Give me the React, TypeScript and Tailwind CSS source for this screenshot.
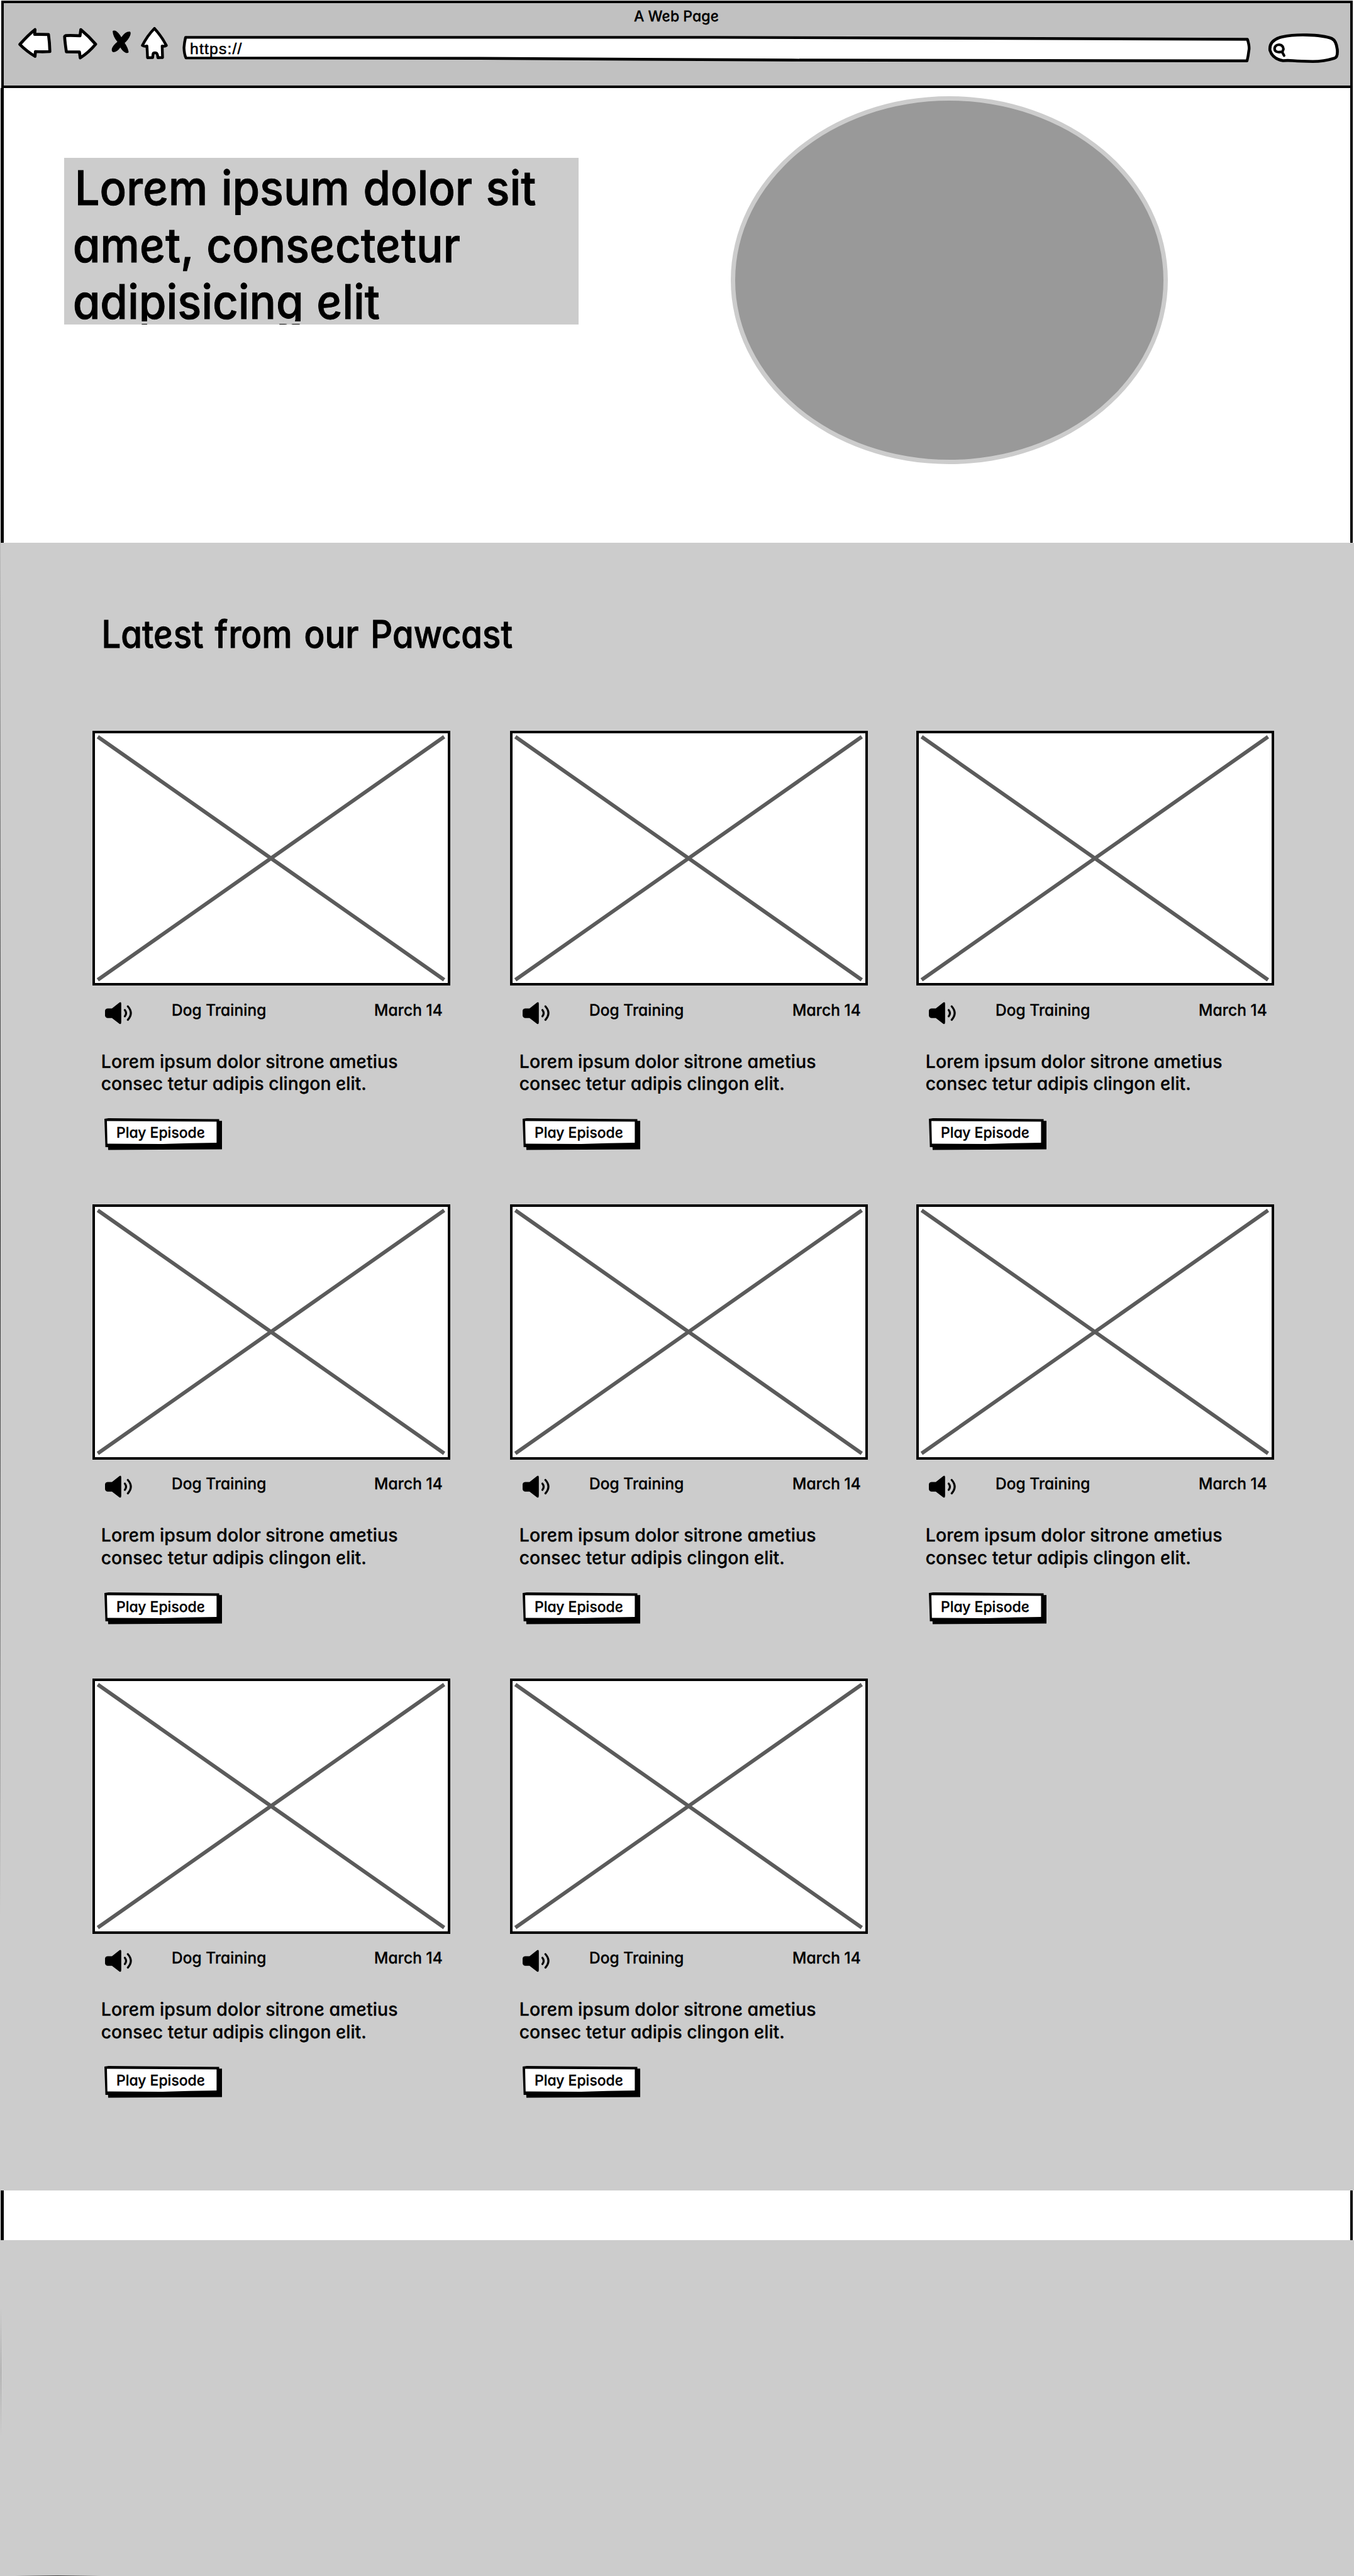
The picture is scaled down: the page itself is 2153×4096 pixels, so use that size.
import type { ReactNode } from "react";

const outline = {
  fill: "#fff",
  stroke: "#000",
  strokeWidth: 15,
  strokeLinejoin: "round" as const,
  strokeLinecap: "round" as const,
};

/* Upright single-storey lettering: the italic cut, sheared back to vertical. */
function Ink({ className, children }: { className: string; children: ReactNode }) {
  return (
    <span className={`inline-block whitespace-nowrap italic skew-x-[9.4deg] ${className}`}>{children}</span>
  );
}

function BackIcon() {
  return (
    <svg viewBox="90 138 175 165" className="h-[51.9px] w-[55.1px] shrink-0">
      <path
        {...outline}
        d="M101 226 Q142 179 178 151 Q177 165 176 175 Q210 174 246 176 Q252 218 253 262 Q215 264 180 262 L178 286 Q137 262 101 226Z"
      />
    </svg>
  );
}

function ForwardIcon() {
  return (
    <svg viewBox="310 138 185 165" className="ml-[14.2px] h-[51.9px] w-[58.2px] shrink-0">
      <path
        {...outline}
        d="M331 181 Q366 180 403 182 L407 151 Q449 186 482 225 Q446 268 404 294 L400 264 L334 263 Q327 218 325 186 Q326 182 331 181Z"
      />
    </svg>
  );
}

function StopIcon() {
  return (
    <svg viewBox="555 138 110 165" className="ml-[18.9px] h-[51.9px] w-[34.6px] shrink-0">
      <path d="M568 159 Q573 153 584 157 Q601 168 612 190 Q632 159 655 161 Q662 164 657 180 Q648 202 629 218 Q646 243 649 264 Q648 271 636 269 Q618 261 607 241 Q591 264 571 265 Q562 263 564 248 Q570 230 592 213 Q570 188 568 159Z" />
    </svg>
  );
}

function HomeIcon() {
  return (
    <svg viewBox="705 138 150 165" className="ml-[12.6px] h-[51.9px] w-[47.2px] shrink-0">
      <path
        {...outline}
        strokeWidth={14}
        d="M780 145 Q818 187 840 231 Q830 237 819 234 Q820 264 821 292 L797 293 Q796 270 788 269 Q775 267 773 274 L771 292 L745 293 Q744 262 742 234 Q730 238 719 231 Q743 183 780 145Z"
      />
    </svg>
  );
}

function AddressBar() {
  return (
    <div className="relative ml-[18.9px] h-[59.8px] w-[1701.4px] shrink-0 pt-[19.5px] pl-[14.2px]">
      <svg viewBox="915 138 5405 190" className="absolute inset-0 h-full w-full">
        <path
          {...outline}
          strokeWidth={14}
          d="M937 190 L3600 190 Q5000 192 6302 200 Q6314 238 6309 258 Q6306 285 6300 309 Q5000 308 4000 305 Q3000 297 2400 296 L939 294 Q930 275 929 242 Q931 215 937 190Z"
        />
      </svg>
      <span className="relative block font-['Liberation_Sans',sans-serif] text-[24.6px] leading-[30px] tracking-[1.2px] [-webkit-text-stroke:0.6px_black]">
        https://
      </span>
    </div>
  );
}

function SearchBox() {
  return (
    <svg viewBox="1060 138 370 190" className="ml-[25.2px] h-[59.8px] w-[116.5px] shrink-0">
      <path
        {...outline}
        d="M1140 308 Q1088 300 1074 256 Q1068 205 1134 188 Q1190 176 1260 178 Q1345 180 1386 196 Q1409 207 1414 252 Q1417 290 1400 295 Q1345 312 1290 312 Q1230 311 1190 308 Q1160 306 1140 308Z"
      />
      <path
        fill="none"
        stroke="#000"
        strokeWidth="13"
        strokeLinecap="round"
        d="M1135 263 Q1098 270 1097 247 Q1099 228 1120 227 Q1140 229 1142 249 Q1140 258 1135 263 L1145 282"
      />
    </svg>
  );
}

function Toolbar() {
  return (
    <header className="mt-px mr-[2px] ml-[2px] flex h-[139px] flex-col border-4 border-black bg-[#c1c1c1]">
      <div className="flex h-[42px] shrink-0 justify-center">
        <Ink className="origin-[50%_70%] scale-x-[0.97] text-[23.8px] leading-[42px] font-medium [-webkit-text-stroke:0.3px_black]">
          A Web Page
        </Ink>
      </div>
      <div className="-mt-[4px] flex pl-[22.3px]">
        <BackIcon />
        <ForwardIcon />
        <StopIcon />
        <HomeIcon />
        <AddressBar />
        <SearchBox />
      </div>
    </header>
  );
}

function Hero() {
  return (
    <section className="mr-[2px] ml-px flex h-[723px] items-start border-r-4 border-l-5 border-black bg-white">
      <div className="relative mt-[111px] ml-[96px] flex h-[265px] w-[818px] flex-col items-start overflow-hidden bg-[#ccc] pt-[3px] pl-[17px] text-[75.5px] leading-[90.6px] font-medium [-webkit-text-stroke:1px_black]">
        <Ink className="ml-[3px] shrink-0 origin-[0_80%] scale-x-[0.932] [word-spacing:3px]">Lorem ipsum dolor sit</Ink>
        <Ink className="shrink-0 origin-[0_80%] scale-x-[0.934] [word-spacing:2px]">amet, consectetur</Ink>
        <Ink className="shrink-0 origin-[0_80%] scale-x-[0.934] [word-spacing:2px]">adipisicing elit</Ink>
        <div className="absolute bottom-[1px] left-0 h-[4px] w-full bg-[#ccc]" />
      </div>
      <div className="mt-[13px] ml-[242px] h-[585px] w-[695px] rounded-[50%] border-[7px] border-[#ccc] bg-[#999]" />
    </section>
  );
}

function SpeakerIcon() {
  return (
    <svg viewBox="0 0 46 38" className="mt-[3px] ml-[20.4px] h-[38px] w-[46px] shrink-0">
      <path d="M4 10.5 L11 10.5 L23 1 Q25.8 -0.5 25.8 3 L25.8 32.5 Q25.8 36 23 35 L11 25.8 L4 25.8 Q0 25 0 21.5 L0 14.5 Q0 11 4 10.5Z" />
      <g fill="none" stroke="#000" strokeWidth="3.2" strokeLinecap="round">
        <path d="M31.5 13 Q35.5 18 31.5 23" />
        <path d="M36.3 7.2 Q45.8 17.8 36.3 28.6" />
      </g>
    </svg>
  );
}

function PlayButton() {
  return (
    <button className="relative mt-[37px] ml-[19.6px] flex h-[51px] w-[188px] items-start pt-[8px] pl-[20px] text-left">
      <svg viewBox="0 0 188 51" className="absolute inset-0 h-full w-full">
        <path d="M0 1 L6.6 0 L182.5 1.4 L182.5 4.2 L187 4.2 L187 49.4 L6 50.4 L5.8 46 L1.6 46Z" />
        <path fill="#fff" d="M4 4.6 L178.4 5.6 L178.4 39 Q135 39.5 93 41 L4.8 40.6Z" />
      </svg>
      <Ink className="origin-[0_78%] scale-x-[0.98] text-[23.4px] leading-[30px] font-medium">Play Episode</Ink>
    </button>
  );
}

function Episode() {
  return (
    <article className="w-[570px] font-medium [-webkit-text-stroke:0.3px_black]">
      <div className="h-[405.5px] w-[569px] border-4 border-black bg-white">
        <svg viewBox="4 4 562 398" className="h-full w-full" preserveAspectRatio="none">
          <path stroke="#5b5b5b" strokeWidth="6" d="M8.5 9.5 L560.3 396.5 M560.3 9.5 L8.5 396.5" />
        </svg>
      </div>
      <div className="mt-[22.7px] flex h-[32px] items-start pr-[11px] text-[25.6px] leading-[32px]">
        <SpeakerIcon />
        <Ink className="ml-[61px] origin-[0_78%] scale-x-[0.96]">Dog Training</Ink>
        <Ink className="ml-auto origin-[100%_78%] scale-x-[0.965]">March 14</Ink>
      </div>
      <div className="mt-[47.9px] flex flex-col items-start pl-[15.5px] text-[29px] leading-[35.6px]">
        <Ink className="origin-[0_78%] scale-x-[0.983]">Lorem ipsum dolor sitrone ametius</Ink>
        <Ink className="origin-[0_78%] scale-x-[0.975]">consec tetur adipis clingon elit.</Ink>
      </div>
      <PlayButton />
    </article>
  );
}

function Episodes() {
  return (
    <section className="relative h-[2620px] bg-[#ccc] pt-[105px]">
      <div className="absolute top-0 left-0 h-[2180px] w-px bg-linear-to-b from-[#bbb] via-[#2b2b2b] to-[#ccc]" />
      <h2 className="pl-[164px] text-[60.5px] leading-[80px] font-medium [-webkit-text-stroke:1px_black]">
        <Ink className="origin-[0_78%] scale-x-[0.9] [word-spacing:5px]">
          Latest <span className="inline-block skew-x-[-9.4deg] not-italic">f</span>rom our Pawcast
        </Ink>
      </h2>
      <div className="mt-[113.5px] grid auto-rows-[753.8px] grid-cols-[664.5px_646px_570px] pl-[146.5px]">
        {Array.from({ length: 8 }, (_, i) => (
          <Episode key={i} />
        ))}
      </div>
    </section>
  );
}

export default function App() {
  return (
    <div className="flex h-[4096px] w-[2153px] flex-col overflow-hidden bg-white font-['Inter','Open_Sans',sans-serif] text-black">
      <Toolbar />
      <Hero />
      <Episodes />
      <div className="mr-[2px] ml-px h-[79px] shrink-0 border-r-4 border-l-5 border-black bg-white" />
      <footer className="relative flex-1 bg-[#ccc]">
        <div className="absolute top-[106px] left-px h-[208px] w-px bg-linear-to-b from-[#ccc] via-[#999] to-[#ccc]" />
        <div className="absolute bottom-0 left-[24px] h-px w-[136px] bg-linear-to-r from-[#ccc] via-[#444] to-[#ccc]" />
      </footer>
    </div>
  );
}
